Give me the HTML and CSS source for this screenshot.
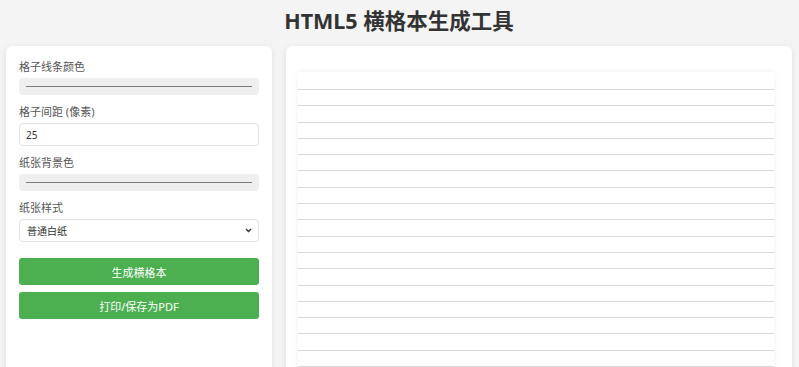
FILE: index.html
```html
<!DOCTYPE html>
<html lang="zh-CN">
<head>
    <meta charset="UTF-8">
    <meta name="viewport" content="width=device-width, initial-scale=1.0">
    <title>HTML5 横格本生成工具</title>
    <link rel="stylesheet" href="styles.css">
</head>
<body>
    <h1>HTML5 横格本生成工具</h1>
    <div class="container">
        <div class="controls">
            <div class="form-group">
                <label for="lineColor">格子线条颜色</label>
                <input type="color" id="lineColor" value="#cccccc">
            </div>
            <div class="form-group">
                <label for="spacing">格子间距 (像素)</label>
                <input type="number" id="spacing" min="10" value="25">
            </div>
            <div class="form-group">
                <label for="bgColor">纸张背景色</label>
                <input type="color" id="bgColor" value="#ffffff">
            </div>
            <div class="form-group">
                <label for="paperStyle">纸张样式</label>
                <select id="paperStyle">
                    <option>普通白纸</option>
                    <option>牛皮纸</option>
                    <option>米黄纸</option>
                </select>
            </div>
            <button type="button" class="btn">生成横格本</button>
            <button type="button" class="btn">打印/保存为PDF</button>
        </div>
        <div class="preview">
            <div class="paper">
                <div class="lines"></div>
            </div>
        </div>
    </div>
</body>
</html>
```

FILE: styles.css
```css
body {
    font-family: "Noto Sans", "Noto Sans CJK SC", sans-serif;
    background-color: #f4f4f4;
    color: #333;
    margin: 0;
    padding: 0 7px 0 6px;
}
h1 {
    margin: 0;
    padding: 7px 0 12px;
    font-size: 21.5px;
    line-height: 27px;
    text-align: center;
    color: #333;
}
.container {
    display: flex;
    gap: 14px;
    align-items: flex-start;
}
.controls {
    width: 266px;
    box-sizing: border-box;
    padding: 13px 13px 60px;
    background-color: #fff;
    border-radius: 6px;
    box-shadow: 0 1px 6px rgba(0, 0, 0, 0.08);
}
.form-group {
    margin-bottom: 9px;
}
.form-group label {
    display: block;
    font-size: 11px;
    line-height: 16px;
    color: #555;
    margin-bottom: 3px;
}
.form-group input[type="color"] {
    display: block;
    width: 100%;
    height: 17px;
    box-sizing: border-box;
    padding: 8px 7px 8px;
    border: none;
    border-radius: 4px;
    background-color: #efefef;
    -webkit-appearance: none;
    appearance: none;
}
.form-group input[type="color"]::-webkit-color-swatch-wrapper {
    padding: 0;
}
.form-group input[type="color"]::-webkit-color-swatch {
    border: none;
    border-top: 1px solid #7a7a7a;
    border-radius: 0;
}
.form-group input[type="number"],
.form-group select {
    display: block;
    width: 100%;
    height: 23px;
    box-sizing: border-box;
    padding: 0 6px;
    border: 1px solid #e2e2e2;
    border-radius: 4px;
    background-color: #fff;
    font-family: inherit;
    font-size: 10px;
    color: #333;
}
.form-group select {
    padding-left: 7px;
    -webkit-appearance: none;
    appearance: none;
    background-image: url("data:image/svg+xml,%3Csvg xmlns='http://www.w3.org/2000/svg' width='7' height='5' viewBox='0 0 7 5'%3E%3Cpath d='M1 1l2.5 2.5L6 1' fill='none' stroke='%23333' stroke-width='1.4'/%3E%3C/svg%3E");
    background-repeat: no-repeat;
    background-position: right 6px center;
}
.form-group:last-of-type {
    margin-bottom: 16px;
}
.btn {
    display: block;
    width: 100%;
    height: 27px;
    margin-bottom: 7px;
    border: none;
    border-radius: 3px;
    background-color: #4caf50;
    color: #fff;
    font-family: inherit;
    font-size: 11px;
    cursor: pointer;
}
.btn:hover {
    background-color: #45a049;
}
.preview {
    flex: 1;
    height: 400px;
    box-sizing: border-box;
    padding: 26px 12px 0;
    background-color: #fff;
    border-radius: 6px;
    box-shadow: 0 1px 6px rgba(0, 0, 0, 0.08);
}
.paper {
    width: 476px;
    height: 360px;
    padding-top: 17px;
    box-sizing: border-box;
    background-color: #fff;
    box-shadow: 0 0 6px rgba(0, 0, 0, 0.07);
}
.lines {
    height: 100%;
    background-image: repeating-linear-gradient(to bottom, #d9d9d9 0, #d9d9d9 1px, transparent 1px, transparent 16.3px);
}
```
